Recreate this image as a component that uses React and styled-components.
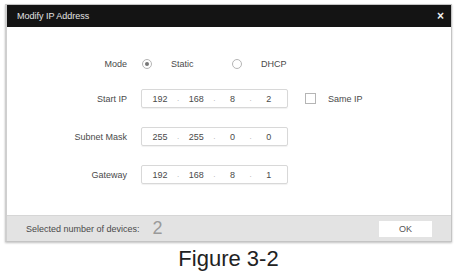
import styled, { createGlobalStyle } from "styled-components";

const Global = createGlobalStyle`
  html, body {
    margin: 0;
    padding: 0;
    background: #ffffff;
  }
  body {
    font-family: "Liberation Sans", Arial, sans-serif;
  }
`;

function IpInput({ parts }) {
    return (
        <IpBox>
            {parts.map((p, i) => (
                <Segment key={i}>
                    {p}
                    {i < parts.length - 1 && <Dot>.</Dot>}
                </Segment>
            ))}
        </IpBox>
    );
}

function App() {
    return (
        <Page>
            <Global />
            <Dialog>
                <TitleBar>
                    <span>Modify IP Address</span>
                    <Close>×</Close>
                </TitleBar>
                <Body>
                    <Row $tight>
                        <Label>Mode</Label>
                        <Controls>
                            <Option>
                                <Radio $checked />
                                <OptionText>Static</OptionText>
                            </Option>
                            <Option>
                                <Radio />
                                <OptionText>DHCP</OptionText>
                            </Option>
                        </Controls>
                    </Row>
                    <Row>
                        <Label>Start IP</Label>
                        <Controls>
                            <IpInput parts={["192", "168", "8", "2"]} />
                            <Check />
                            <OptionText>Same IP</OptionText>
                        </Controls>
                    </Row>
                    <Row>
                        <Label>Subnet Mask</Label>
                        <Controls>
                            <IpInput parts={["255", "255", "0", "0"]} />
                        </Controls>
                    </Row>
                    <Row>
                        <Label>Gateway</Label>
                        <Controls>
                            <IpInput parts={["192", "168", "8", "1"]} />
                        </Controls>
                    </Row>
                </Body>
                <Footer>
                    <FooterText>Selected number of devices:</FooterText>
                    <Count>2</Count>
                    <OkButton>OK</OkButton>
                </Footer>
            </Dialog>
            <Caption>Figure 3-2</Caption>
        </Page>
    );
}

export default App;

const Page = styled.div`
    width: 461px;
    height: 273px;
    padding: 4px 0 0 5px;
    box-sizing: border-box;
`;

const Dialog = styled.div`
    width: 447px;
    border: 1px solid #c4c4c4;
    border-left: 2px solid #cfcfcf;
    box-sizing: border-box;
    background: #fff;
    box-shadow: 0 1px 2px rgba(0, 0, 0, 0.25);
`;

const TitleBar = styled.div`
    height: 22px;
    background: #141414;
    color: #e4e4e4;
    font-size: 9px;
    display: flex;
    align-items: center;
    justify-content: space-between;
    padding: 0 7px 0 10px;
`;

const Close = styled.span`
    font-size: 12px;
    font-weight: bold;
    color: #f0f0f0;
`;

const Body = styled.div`
    height: 188px;
    padding-top: 27px;
    box-sizing: border-box;
    display: flex;
    flex-direction: column;
    gap: 19px;
`;

const Row = styled.div`
    display: flex;
    align-items: center;
    height: 19px;
    margin-bottom: ${(p) => (p.$tight ? "-3px" : "0")};
`;

const Label = styled.div`
    width: 120px;
    text-align: right;
    font-size: 9px;
    color: #4a4a4a;
    margin-right: 15px;
`;

const Controls = styled.div`
    display: flex;
    align-items: center;
`;

const Option = styled.div`
    width: 90px;
    display: flex;
    align-items: center;
    gap: 19px;
`;

const Radio = styled.span`
    width: 10px;
    height: 10px;
    border-radius: 50%;
    border: 1px solid #b5b5b5;
    box-sizing: border-box;
    display: flex;
    align-items: center;
    justify-content: center;
    &::after {
        content: "";
        width: 4px;
        height: 4px;
        border-radius: 50%;
        background: ${(p) => (p.$checked ? "#777" : "transparent")};
    }
`;

const OptionText = styled.span`
    font-size: 9px;
    color: #4a4a4a;
`;

const IpBox = styled.div`
    width: 147px;
    height: 19px;
    box-sizing: border-box;
    border: 1px solid #d8d8d8;
    border-radius: 2px;
    box-shadow: 0 1px 1px rgba(0, 0, 0, 0.06);
    display: flex;
    margin-left: -1px;
`;

const Segment = styled.div`
    flex: 1;
    position: relative;
    display: flex;
    align-items: center;
    justify-content: center;
    font-size: 9px;
    color: #4a4a4a;
`;

const Dot = styled.span`
    position: absolute;
    right: -1px;
    top: 4px;
    color: #aaa;
    font-size: 8px;
`;

const Check = styled.span`
    width: 11px;
    height: 11px;
    box-sizing: border-box;
    border: 1px solid #b5b5b5;
    margin: 0 12px 0 17px;
`;

const Footer = styled.div`
    height: 26px;
    background: #e3e3e3;
    border-top: 1px solid #d6d6d6;
    box-sizing: border-box;
    display: flex;
    align-items: center;
    padding: 0 19px 0 19px;
`;

const FooterText = styled.span`
    font-size: 9px;
    color: #4a4a4a;
`;

const Count = styled.span`
    font-size: 18px;
    color: #9a9a9a;
    margin-left: 13px;
`;

const OkButton = styled.div`
    margin-left: auto;
    width: 53px;
    height: 16px;
    background: #fff;
    font-size: 9px;
    color: #555;
    display: flex;
    align-items: center;
    justify-content: center;
`;

const Caption = styled.div`
    width: 447px;
    text-align: center;
    font-size: 22px;
    line-height: 22px;
    color: #222;
    margin-top: 6px;
`;
